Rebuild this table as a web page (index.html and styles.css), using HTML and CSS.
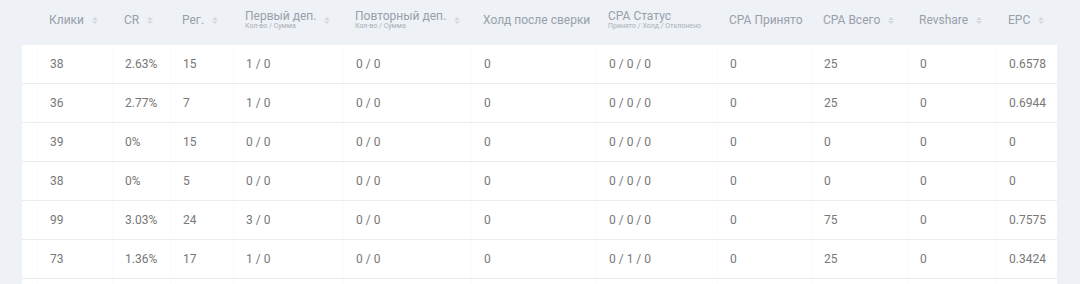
FILE: index.html
```html
<!DOCTYPE html>
<html lang="ru">
<head>
<meta charset="utf-8">
<link rel="stylesheet" href="styles.css">
</head>
<body>
<div class="table">
  <div class="row head">
    <div class="cell"><span class="title">Клики</span><span class="sort"></span></div>
    <div class="cell"><span class="title">CR</span><span class="sort"></span></div>
    <div class="cell"><span class="title">Рег.</span><span class="sort"></span></div>
    <div class="cell"><span class="stack"><span class="title">Первый деп.</span><span class="sub">Кол-во / Сумма</span></span><span class="sort"></span></div>
    <div class="cell"><span class="stack"><span class="title">Повторный деп.</span><span class="sub">Кол-во / Сумма</span></span><span class="sort"></span></div>
    <div class="cell"><span class="title">Холд после сверки</span></div>
    <div class="cell"><span class="stack"><span class="title">CPA Статус</span><span class="sub">Принято / Холд / Отклонено</span></span></div>
    <div class="cell"><span class="title">CPA Принято</span></div>
    <div class="cell"><span class="title">CPA Всего</span><span class="sort"></span></div>
    <div class="cell"><span class="title">Revshare</span><span class="sort"></span></div>
    <div class="cell"><span class="title">EPC</span><span class="sort"></span></div>
  </div>
  <div class="card">
    <div class="row body"><div class="cell">38</div><div class="cell">2.63%</div><div class="cell">15</div><div class="cell">1 / 0</div><div class="cell">0 / 0</div><div class="cell">0</div><div class="cell">0 / 0 / 0</div><div class="cell">0</div><div class="cell">25</div><div class="cell">0</div><div class="cell">0.6578</div></div>
    <div class="row body"><div class="cell">36</div><div class="cell">2.77%</div><div class="cell">7</div><div class="cell">1 / 0</div><div class="cell">0 / 0</div><div class="cell">0</div><div class="cell">0 / 0 / 0</div><div class="cell">0</div><div class="cell">25</div><div class="cell">0</div><div class="cell">0.6944</div></div>
    <div class="row body"><div class="cell">39</div><div class="cell">0%</div><div class="cell">15</div><div class="cell">0 / 0</div><div class="cell">0 / 0</div><div class="cell">0</div><div class="cell">0 / 0 / 0</div><div class="cell">0</div><div class="cell">0</div><div class="cell">0</div><div class="cell">0</div></div>
    <div class="row body"><div class="cell">38</div><div class="cell">0%</div><div class="cell">5</div><div class="cell">0 / 0</div><div class="cell">0 / 0</div><div class="cell">0</div><div class="cell">0 / 0 / 0</div><div class="cell">0</div><div class="cell">0</div><div class="cell">0</div><div class="cell">0</div></div>
    <div class="row body"><div class="cell">99</div><div class="cell">3.03%</div><div class="cell">24</div><div class="cell">3 / 0</div><div class="cell">0 / 0</div><div class="cell">0</div><div class="cell">0 / 0 / 0</div><div class="cell">0</div><div class="cell">75</div><div class="cell">0</div><div class="cell">0.7575</div></div>
    <div class="row body"><div class="cell">73</div><div class="cell">1.36%</div><div class="cell">17</div><div class="cell">1 / 0</div><div class="cell">0 / 0</div><div class="cell">0</div><div class="cell">0 / 1 / 0</div><div class="cell">0</div><div class="cell">25</div><div class="cell">0</div><div class="cell">0.3424</div></div>
    <div class="row body"><div class="cell"></div><div class="cell"></div><div class="cell"></div><div class="cell"></div><div class="cell"></div><div class="cell"></div><div class="cell"></div><div class="cell"></div><div class="cell"></div><div class="cell"></div><div class="cell"></div></div>
  </div>
</div>
</body>
</html>
```

FILE: styles.css
```css
html, body {
  margin: 0;
  padding: 0;
  background: #eef1f5;
  font-family: Roboto, "Noto Sans", "Liberation Sans", sans-serif;
  overflow: hidden;
}

.table {
  margin-left: 22px;
  width: 1035px;
}

.row {
  display: grid;
  grid-template-columns: 75px 58px 63px 110px 128px 125px 121px 94px 96px 89px 46px;
  padding: 0 15px;
}

.head {
  height: 40px;
  margin-bottom: 5px;
}

.head .cell {
  display: flex;
  align-items: center;
  padding-left: 12px;
  color: #98a0ab;
  font-size: 12px;
  font-weight: 400;
}

.stack {
  display: flex;
  flex-direction: column;
  line-height: 12px;
}

.sub {
  font-size: 7px;
  line-height: 9px;
  font-weight: 400;
  color: #a9b0b9;
}

.sort {
  margin-left: 8px;
  display: inline-flex;
  flex-direction: column;
  gap: 1px;
}

.sort::before,
.sort::after {
  content: "";
  width: 0;
  height: 0;
  border-left: 3px solid transparent;
  border-right: 3px solid transparent;
}

.sort::before {
  border-bottom: 3px solid #d5d9de;
}

.sort::after {
  border-top: 3px solid #d5d9de;
}

.card {
  background: #ffffff;
}

.body {
  height: 38px;
  border-bottom: 1px solid #eaedf0;
}

.body .cell {
  display: flex;
  align-items: center;
  padding-left: 12px;
  border-left: 1px solid #fbfbfb;
  font-size: 12px;
  color: #777777;
  font-weight: 400;
}
```
